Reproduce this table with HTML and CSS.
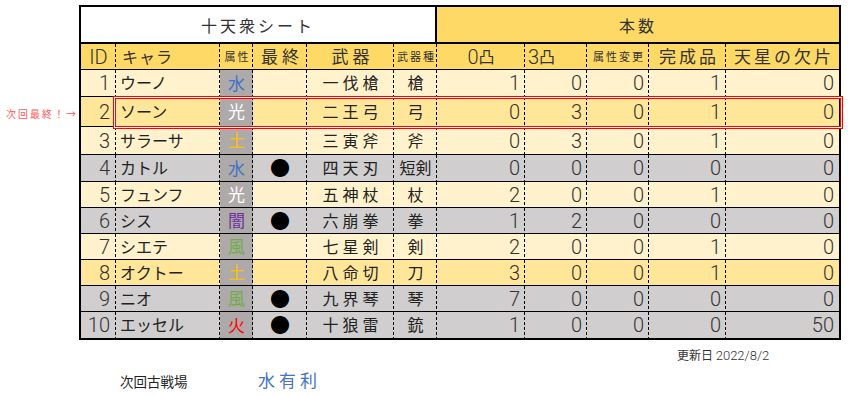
FILE: index.html
```html
<!DOCTYPE html>
<html lang="ja">
<head>
<meta charset="utf-8">
<title>十天衆シート</title>
<link rel="stylesheet" href="styles.css">
</head>
<body>
<div class="page">
  <div class="sheet">
    <div class="note">次回最終！→</div>
    <div class="grid">
      <div class="row title">
        <div class="c t-left">十天衆シート</div>
        <div class="c t-right">本数</div>
      </div>
      <div class="row head">
        <div class="c ctr num">ID</div>
        <div class="c left kana">キャラ</div>
        <div class="c ctr small">属性</div>
        <div class="c ctr wide">最終</div>
        <div class="c ctr wide">武器</div>
        <div class="c ctr small">武器種</div>
        <div class="c ctr"><span class="num">0</span>凸</div>
        <div class="c left pad3"><span class="num">3</span>凸</div>
        <div class="c ctr small">属性変更</div>
        <div class="c ctr wide3">完成品</div>
        <div class="c ctr wide3">天星の欠片</div>
      </div>

      <div class="row light">
        <div class="c id num">1</div><div class="c name">ウーノ</div><div class="c attr water">水</div><div class="c last"></div><div class="c weapon">一伐槍</div><div class="c wtype">槍</div>
        <div class="c val num">1</div><div class="c val num">0</div><div class="c val num">0</div><div class="c val num">1</div><div class="c val num">0</div>
      </div>
      <div class="row mid">
        <div class="c id num">2</div><div class="c name">ソーン</div><div class="c attr light-a">光</div><div class="c last"></div><div class="c weapon">二王弓</div><div class="c wtype">弓</div>
        <div class="c val num">0</div><div class="c val num">3</div><div class="c val num">0</div><div class="c val num">1</div><div class="c val num">0</div>
      </div>
      <div class="row light">
        <div class="c id num">3</div><div class="c name">サラーサ</div><div class="c attr earth">土</div><div class="c last"></div><div class="c weapon">三寅斧</div><div class="c wtype">斧</div>
        <div class="c val num">0</div><div class="c val num">3</div><div class="c val num">0</div><div class="c val num">1</div><div class="c val num">0</div>
      </div>
      <div class="row gray">
        <div class="c id num">4</div><div class="c name">カトル</div><div class="c attr water">水</div><div class="c last">●</div><div class="c weapon">四天刃</div><div class="c wtype">短剣</div>
        <div class="c val num">0</div><div class="c val num">0</div><div class="c val num">0</div><div class="c val num">0</div><div class="c val num">0</div>
      </div>
      <div class="row light">
        <div class="c id num">5</div><div class="c name">フュンフ</div><div class="c attr light-a">光</div><div class="c last"></div><div class="c weapon">五神杖</div><div class="c wtype">杖</div>
        <div class="c val num">2</div><div class="c val num">0</div><div class="c val num">0</div><div class="c val num">1</div><div class="c val num">0</div>
      </div>
      <div class="row gray">
        <div class="c id num">6</div><div class="c name">シス</div><div class="c attr dark">闇</div><div class="c last">●</div><div class="c weapon">六崩拳</div><div class="c wtype">拳</div>
        <div class="c val num">1</div><div class="c val num">2</div><div class="c val num">0</div><div class="c val num">0</div><div class="c val num">0</div>
      </div>
      <div class="row light">
        <div class="c id num">7</div><div class="c name">シエテ</div><div class="c attr wind">風</div><div class="c last"></div><div class="c weapon">七星剣</div><div class="c wtype">剣</div>
        <div class="c val num">2</div><div class="c val num">0</div><div class="c val num">0</div><div class="c val num">1</div><div class="c val num">0</div>
      </div>
      <div class="row mid">
        <div class="c id num">8</div><div class="c name">オクトー</div><div class="c attr earth">土</div><div class="c last"></div><div class="c weapon">八命切</div><div class="c wtype">刀</div>
        <div class="c val num">3</div><div class="c val num">0</div><div class="c val num">0</div><div class="c val num">1</div><div class="c val num">0</div>
      </div>
      <div class="row gray">
        <div class="c id num">9</div><div class="c name">ニオ</div><div class="c attr wind">風</div><div class="c last">●</div><div class="c weapon">九界琴</div><div class="c wtype">琴</div>
        <div class="c val num">7</div><div class="c val num">0</div><div class="c val num">0</div><div class="c val num">0</div><div class="c val num">0</div>
      </div>
      <div class="row gray">
        <div class="c id num">10</div><div class="c name">エッセル</div><div class="c attr fire">火</div><div class="c last">●</div><div class="c weapon">十狼雷</div><div class="c wtype">銃</div>
        <div class="c val num">1</div><div class="c val num">0</div><div class="c val num">0</div><div class="c val num">0</div><div class="c val num">50</div>
      </div>
    </div>
    <div class="mark"></div>
  </div>
  <div class="updated">更新日 <span class="date">2022/8/2</span></div>
  <div class="next"><span class="next-label">次回古戦場</span><span class="adv">水有利</span></div>
</div>
</body>
</html>
```

FILE: styles.css
```css
* { box-sizing: border-box; }

body {
  margin: 0;
  background: #fff;
  font-family: "Noto Sans CJK JP", sans-serif;
  color: #222;
}

.page {
  width: 850px;
  height: 396px;
  padding-top: 5px;
}

.sheet {
  position: relative;
  padding-left: 79px;
}

.grid {
  display: grid;
  width: 762px;
  border: 2px solid #000;
  grid-template-columns: 35px 104px 33px 54px 87px 43px 88px 62px 62px 77px 113px;
  grid-template-rows: 37px 26px 27px 30px 28px 27px 26px 26px 26px 26px 26px 26px;
}

.row { display: contents; }

.c {
  display: flex;
  align-items: center;
  border-bottom: 1px solid #000;
  font-size: 16px;
  line-height: 1.2;
  white-space: nowrap;
  overflow: hidden;
  background-image: repeating-linear-gradient(to bottom, #000 0 3px, transparent 3px 5px);
  background-size: 1px 100%;
  background-position: right top;
  background-repeat: no-repeat;
}

.row > .c:last-child { background-image: none; }
.row:last-child > .c { border-bottom: 0; }

/* title row */
.title .c {
  justify-content: center;
  border-bottom: 2px solid #000;
  font-size: 16px;
  letter-spacing: 3px;
  color: #333;
  padding-top: 2px;
}
.t-left {
  grid-column: 1 / span 6;
  background-color: #fff;
  border-right: 2px solid #000;
  background-image: none !important;
}
.t-right {
  grid-column: 7 / span 5;
  background-color: #ffd966;
}

/* header row */
.head .c { background-color: #ffd966; color: #333; }
.ctr { justify-content: center; }
.left { justify-content: flex-start; padding-left: 6px; }
.pad3 { padding-left: 3px; }
.small { font-size: 11px; letter-spacing: 2px; padding-left: 2px; }
.wide { letter-spacing: 4px; padding-left: 4px; font-size: 17px; }
.wide3 { letter-spacing: 3px; padding-left: 3px; font-size: 17px; }
.kana { letter-spacing: 1px; }

.num {
  font-family: Roboto, "Liberation Sans", sans-serif;
  font-weight: 300;
  font-size: 20px;
  color: #333;
}

/* row colors */
.light .c { background-color: #fff2cc; }
.mid .c { background-color: #ffe699; }
.gray .c { background-color: #d0cece; }

/* data cells */
.id { justify-content: flex-end; padding-right: 6px; }
.name { padding-left: 4px; }
.c.attr { background-color: #aeaaaa; justify-content: center; font-size: 17px; }
.water { color: #4472c4; }
.light-a { color: #ffffff; }
.earth { color: #ffc000; }
.dark { color: #7030a0; }
.wind { color: #70ad47; }
.fire { color: #ff0000; }
.c.last { justify-content: center; font-size: 20px; line-height: 1; overflow: visible; color: #000; }
.weapon { justify-content: center; letter-spacing: 4px; padding-left: 4px; }
.wtype { justify-content: center; }
.val { justify-content: flex-end; padding-right: 5px; }

/* overlay annotations */
.note {
  position: absolute;
  left: 6px;
  top: 101px;
  font-size: 10px;
  letter-spacing: 2px;
  color: #ff5a5a;
}
.mark {
  position: absolute;
  left: 115px;
  top: 93px;
  width: 726px;
  height: 29px;
  border: 1px solid #ff0000;
  box-shadow: 0 0 0 1px #fff6f0, 0 0 0 2px #ff0000;
}

/* footer */
.updated {
  margin: 6px 0 0 677px;
  font-size: 12px;
  color: #333;
}
.updated .date { font-family: Roboto, "Liberation Sans", sans-serif; font-weight: 300; font-size: 13px; }

.next {
  display: flex;
  align-items: baseline;
  margin: 4px 0 0 120px;
}
.next-label { font-size: 13.5px; color: #222; width: 138px; }
.adv { font-size: 17px; letter-spacing: 4px; color: #4472c4; }
```
